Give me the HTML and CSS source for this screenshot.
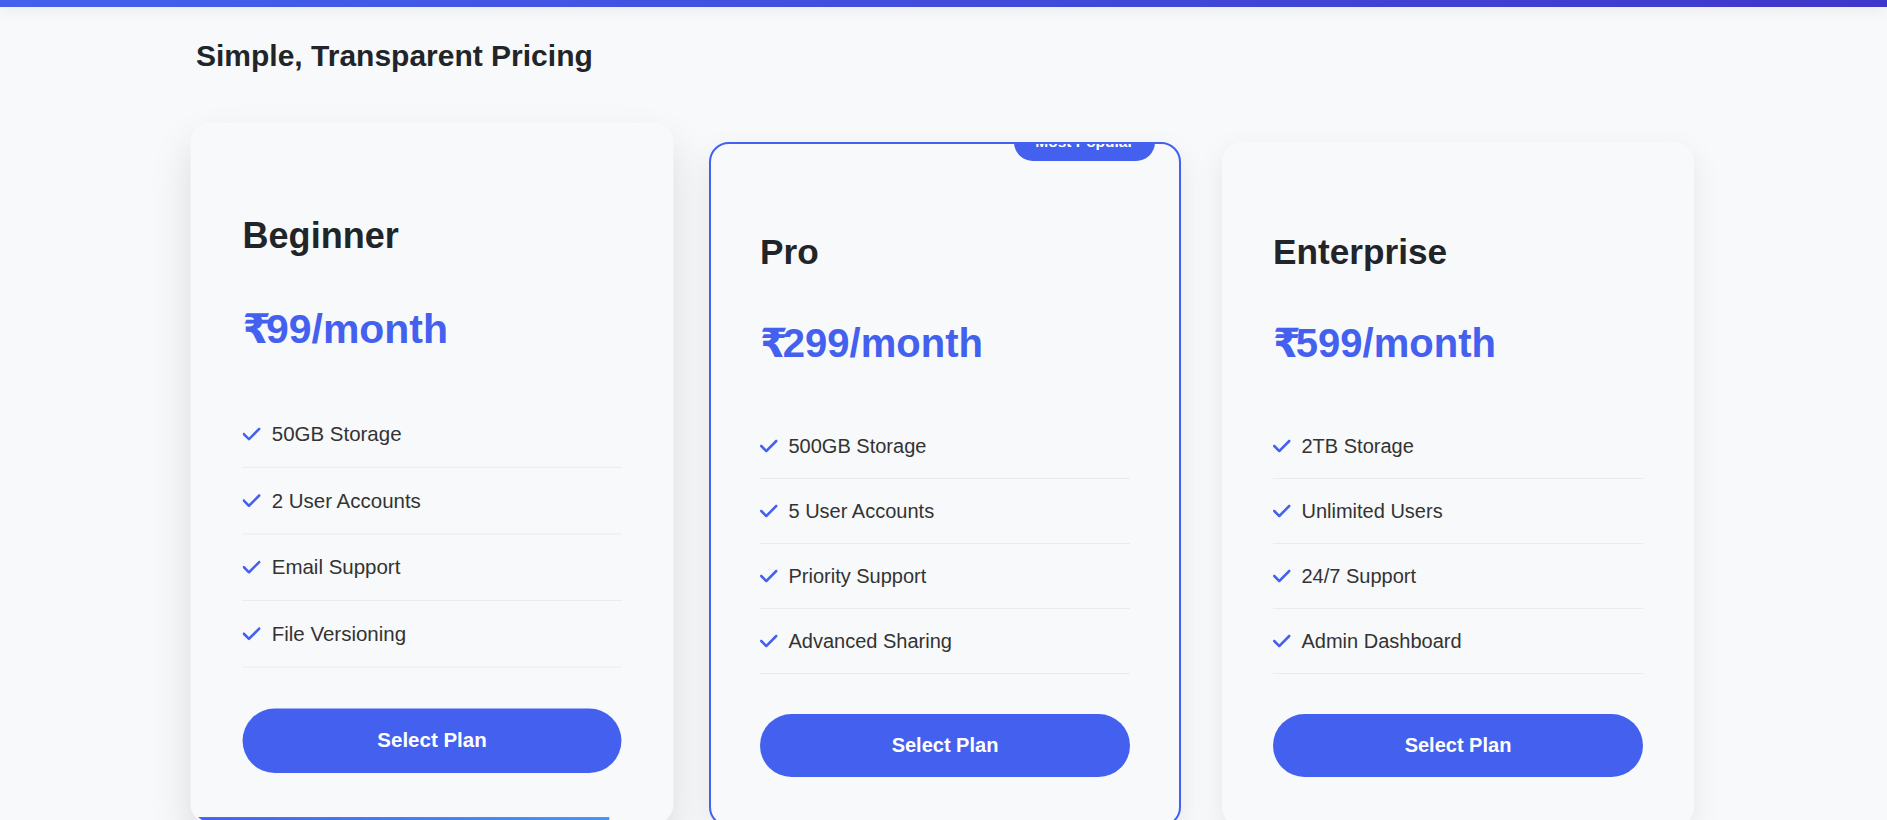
FILE: index.html
```html
<!DOCTYPE html>
<html lang="en">
<head>
<meta charset="UTF-8">
<title>Simple, Transparent Pricing</title>
<link rel="stylesheet" href="styles.css">
</head>
<body>
<div class="top-bar"></div>
<main class="pricing">
  <h2 class="pricing-title">Simple, Transparent Pricing</h2>
  <div class="plans">
    <div class="plan plan--hover">
      <h3 class="plan-name">Beginner</h3>
      <div class="plan-price"><span class="currency">₹</span>99/month</div>
      <ul class="plan-features">
        <li><svg class="check" viewBox="0 0 448 512"><path d="M438.6 105.4c12.5 12.5 12.5 32.8 0 45.3l-256 256c-12.5 12.5-32.8 12.5-45.3 0l-128-128c-12.5-12.5-12.5-32.8 0-45.3s32.8-12.5 45.3 0L160 338.7 393.4 105.4c12.5-12.5 32.8-12.5 45.3 0z"/></svg><span>50GB Storage</span></li>
        <li><svg class="check" viewBox="0 0 448 512"><path d="M438.6 105.4c12.5 12.5 12.5 32.8 0 45.3l-256 256c-12.5 12.5-32.8 12.5-45.3 0l-128-128c-12.5-12.5-12.5-32.8 0-45.3s32.8-12.5 45.3 0L160 338.7 393.4 105.4c12.5-12.5 32.8-12.5 45.3 0z"/></svg><span>2 User Accounts</span></li>
        <li><svg class="check" viewBox="0 0 448 512"><path d="M438.6 105.4c12.5 12.5 12.5 32.8 0 45.3l-256 256c-12.5 12.5-32.8 12.5-45.3 0l-128-128c-12.5-12.5-12.5-32.8 0-45.3s32.8-12.5 45.3 0L160 338.7 393.4 105.4c12.5-12.5 32.8-12.5 45.3 0z"/></svg><span>Email Support</span></li>
        <li><svg class="check" viewBox="0 0 448 512"><path d="M438.6 105.4c12.5 12.5 12.5 32.8 0 45.3l-256 256c-12.5 12.5-32.8 12.5-45.3 0l-128-128c-12.5-12.5-12.5-32.8 0-45.3s32.8-12.5 45.3 0L160 338.7 393.4 105.4c12.5-12.5 32.8-12.5 45.3 0z"/></svg><span>File Versioning</span></li>
      </ul>
      <button class="plan-btn">Select Plan</button>
    </div>
    <div class="plan plan--featured">
      <span class="badge">Most Popular</span>
      <h3 class="plan-name">Pro</h3>
      <div class="plan-price"><span class="currency">₹</span>299/month</div>
      <ul class="plan-features">
        <li><svg class="check" viewBox="0 0 448 512"><path d="M438.6 105.4c12.5 12.5 12.5 32.8 0 45.3l-256 256c-12.5 12.5-32.8 12.5-45.3 0l-128-128c-12.5-12.5-12.5-32.8 0-45.3s32.8-12.5 45.3 0L160 338.7 393.4 105.4c12.5-12.5 32.8-12.5 45.3 0z"/></svg><span>500GB Storage</span></li>
        <li><svg class="check" viewBox="0 0 448 512"><path d="M438.6 105.4c12.5 12.5 12.5 32.8 0 45.3l-256 256c-12.5 12.5-32.8 12.5-45.3 0l-128-128c-12.5-12.5-12.5-32.8 0-45.3s32.8-12.5 45.3 0L160 338.7 393.4 105.4c12.5-12.5 32.8-12.5 45.3 0z"/></svg><span>5 User Accounts</span></li>
        <li><svg class="check" viewBox="0 0 448 512"><path d="M438.6 105.4c12.5 12.5 12.5 32.8 0 45.3l-256 256c-12.5 12.5-32.8 12.5-45.3 0l-128-128c-12.5-12.5-12.5-32.8 0-45.3s32.8-12.5 45.3 0L160 338.7 393.4 105.4c12.5-12.5 32.8-12.5 45.3 0z"/></svg><span>Priority Support</span></li>
        <li><svg class="check" viewBox="0 0 448 512"><path d="M438.6 105.4c12.5 12.5 12.5 32.8 0 45.3l-256 256c-12.5 12.5-32.8 12.5-45.3 0l-128-128c-12.5-12.5-12.5-32.8 0-45.3s32.8-12.5 45.3 0L160 338.7 393.4 105.4c12.5-12.5 32.8-12.5 45.3 0z"/></svg><span>Advanced Sharing</span></li>
      </ul>
      <button class="plan-btn">Select Plan</button>
    </div>
    <div class="plan">
      <h3 class="plan-name">Enterprise</h3>
      <div class="plan-price"><span class="currency">₹</span>599/month</div>
      <ul class="plan-features">
        <li><svg class="check" viewBox="0 0 448 512"><path d="M438.6 105.4c12.5 12.5 12.5 32.8 0 45.3l-256 256c-12.5 12.5-32.8 12.5-45.3 0l-128-128c-12.5-12.5-12.5-32.8 0-45.3s32.8-12.5 45.3 0L160 338.7 393.4 105.4c12.5-12.5 32.8-12.5 45.3 0z"/></svg><span>2TB Storage</span></li>
        <li><svg class="check" viewBox="0 0 448 512"><path d="M438.6 105.4c12.5 12.5 12.5 32.8 0 45.3l-256 256c-12.5 12.5-32.8 12.5-45.3 0l-128-128c-12.5-12.5-12.5-32.8 0-45.3s32.8-12.5 45.3 0L160 338.7 393.4 105.4c12.5-12.5 32.8-12.5 45.3 0z"/></svg><span>Unlimited Users</span></li>
        <li><svg class="check" viewBox="0 0 448 512"><path d="M438.6 105.4c12.5 12.5 12.5 32.8 0 45.3l-256 256c-12.5 12.5-32.8 12.5-45.3 0l-128-128c-12.5-12.5-12.5-32.8 0-45.3s32.8-12.5 45.3 0L160 338.7 393.4 105.4c12.5-12.5 32.8-12.5 45.3 0z"/></svg><span>24/7 Support</span></li>
        <li><svg class="check" viewBox="0 0 448 512"><path d="M438.6 105.4c12.5 12.5 12.5 32.8 0 45.3l-256 256c-12.5 12.5-32.8 12.5-45.3 0l-128-128c-12.5-12.5-12.5-32.8 0-45.3s32.8-12.5 45.3 0L160 338.7 393.4 105.4c12.5-12.5 32.8-12.5 45.3 0z"/></svg><span>Admin Dashboard</span></li>
      </ul>
      <button class="plan-btn">Select Plan</button>
    </div>
  </div>
</main>
</body>
</html>
```

FILE: styles.css
```css
* {
  box-sizing: border-box;
}

html,
body {
  margin: 0;
  padding: 0;
}

body {
  background: #f8f9fa;
  font-family: "Liberation Sans", Arial, "DejaVu Sans", sans-serif;
  color: #212529;
  height: 820px;
  overflow: hidden;
}

.top-bar {
  position: relative;
  z-index: 2;
  height: 7px;
  background: linear-gradient(90deg, #4361ee, #3f37c9);
  box-shadow: 0 2px 15px rgba(0, 0, 0, 0.1);
}

.pricing {
  max-width: 1501px;
  margin: 0 auto;
  padding: 32px 0 0 3px;
}

.pricing-title {
  font-size: 30px;
  font-weight: 700;
  line-height: normal;
  margin: 0 0 69px;
  color: #212529;
}

.plans {
  display: grid;
  grid-template-columns: repeat(3, 1fr);
  gap: 41px;
  align-items: start;
}

.plan {
  position: relative;
  overflow: hidden;
  background: #f8f9fa;
  border: 2px solid transparent;
  border-radius: 20px;
  padding: 48px 49px;
  box-shadow: 0 10px 30px rgba(0, 0, 0, 0.08);
}

.plan--featured {
  border-color: #4361ee;
}

.plan--hover {
  transform: translateY(-11px) scale(1.024);
  box-shadow: 0 20px 40px rgba(0, 0, 0, 0.12);
}

.plan--hover::after {
  content: "";
  position: absolute;
  left: 0;
  bottom: 0;
  width: 100%;
  height: 5px;
  background: linear-gradient(90deg, #4361ee, #4895ef);
  transform-origin: left center;
  transform: scaleX(0.87);
}

.badge {
  position: absolute;
  top: -21px;
  right: 24px;
  padding: 10px 21.5px;
  border-radius: 20px;
  background: #4361ee;
  color: #fff;
  font-size: 15.5px;
  font-weight: 700;
  line-height: normal;
}

.plan-name {
  margin: 40px 0 0;
  font-size: 35.2px;
  font-weight: 700;
  line-height: normal;
  color: #212529;
}

.plan-price {
  margin: 48px 0 47.5px;
  font-size: 40px;
  font-weight: 700;
  line-height: normal;
  color: #4361ee;
}

.currency {
  letter-spacing: -5px;
}

.plan-features {
  list-style: none;
  margin: 0;
  padding: 0;
}

.plan-features li {
  display: flex;
  align-items: center;
  padding: 20px 0;
  font-size: 20px;
  line-height: 24px;
  color: #333;
  border-bottom: 1px solid #e9ecef;
}

.check {
  flex-shrink: 0;
  width: 17.5px;
  height: 20px;
  margin-right: 11px;
  fill: #4361ee;
}

.plan-btn {
  display: block;
  width: 100%;
  margin-top: 40px;
  padding: 20px;
  border: 0;
  border-radius: 50px;
  background: #4361ee;
  color: #fff;
  font-family: "Liberation Sans", Arial, "DejaVu Sans", sans-serif;
  font-size: 20px;
  font-weight: 700;
  line-height: 23px;
}
```
